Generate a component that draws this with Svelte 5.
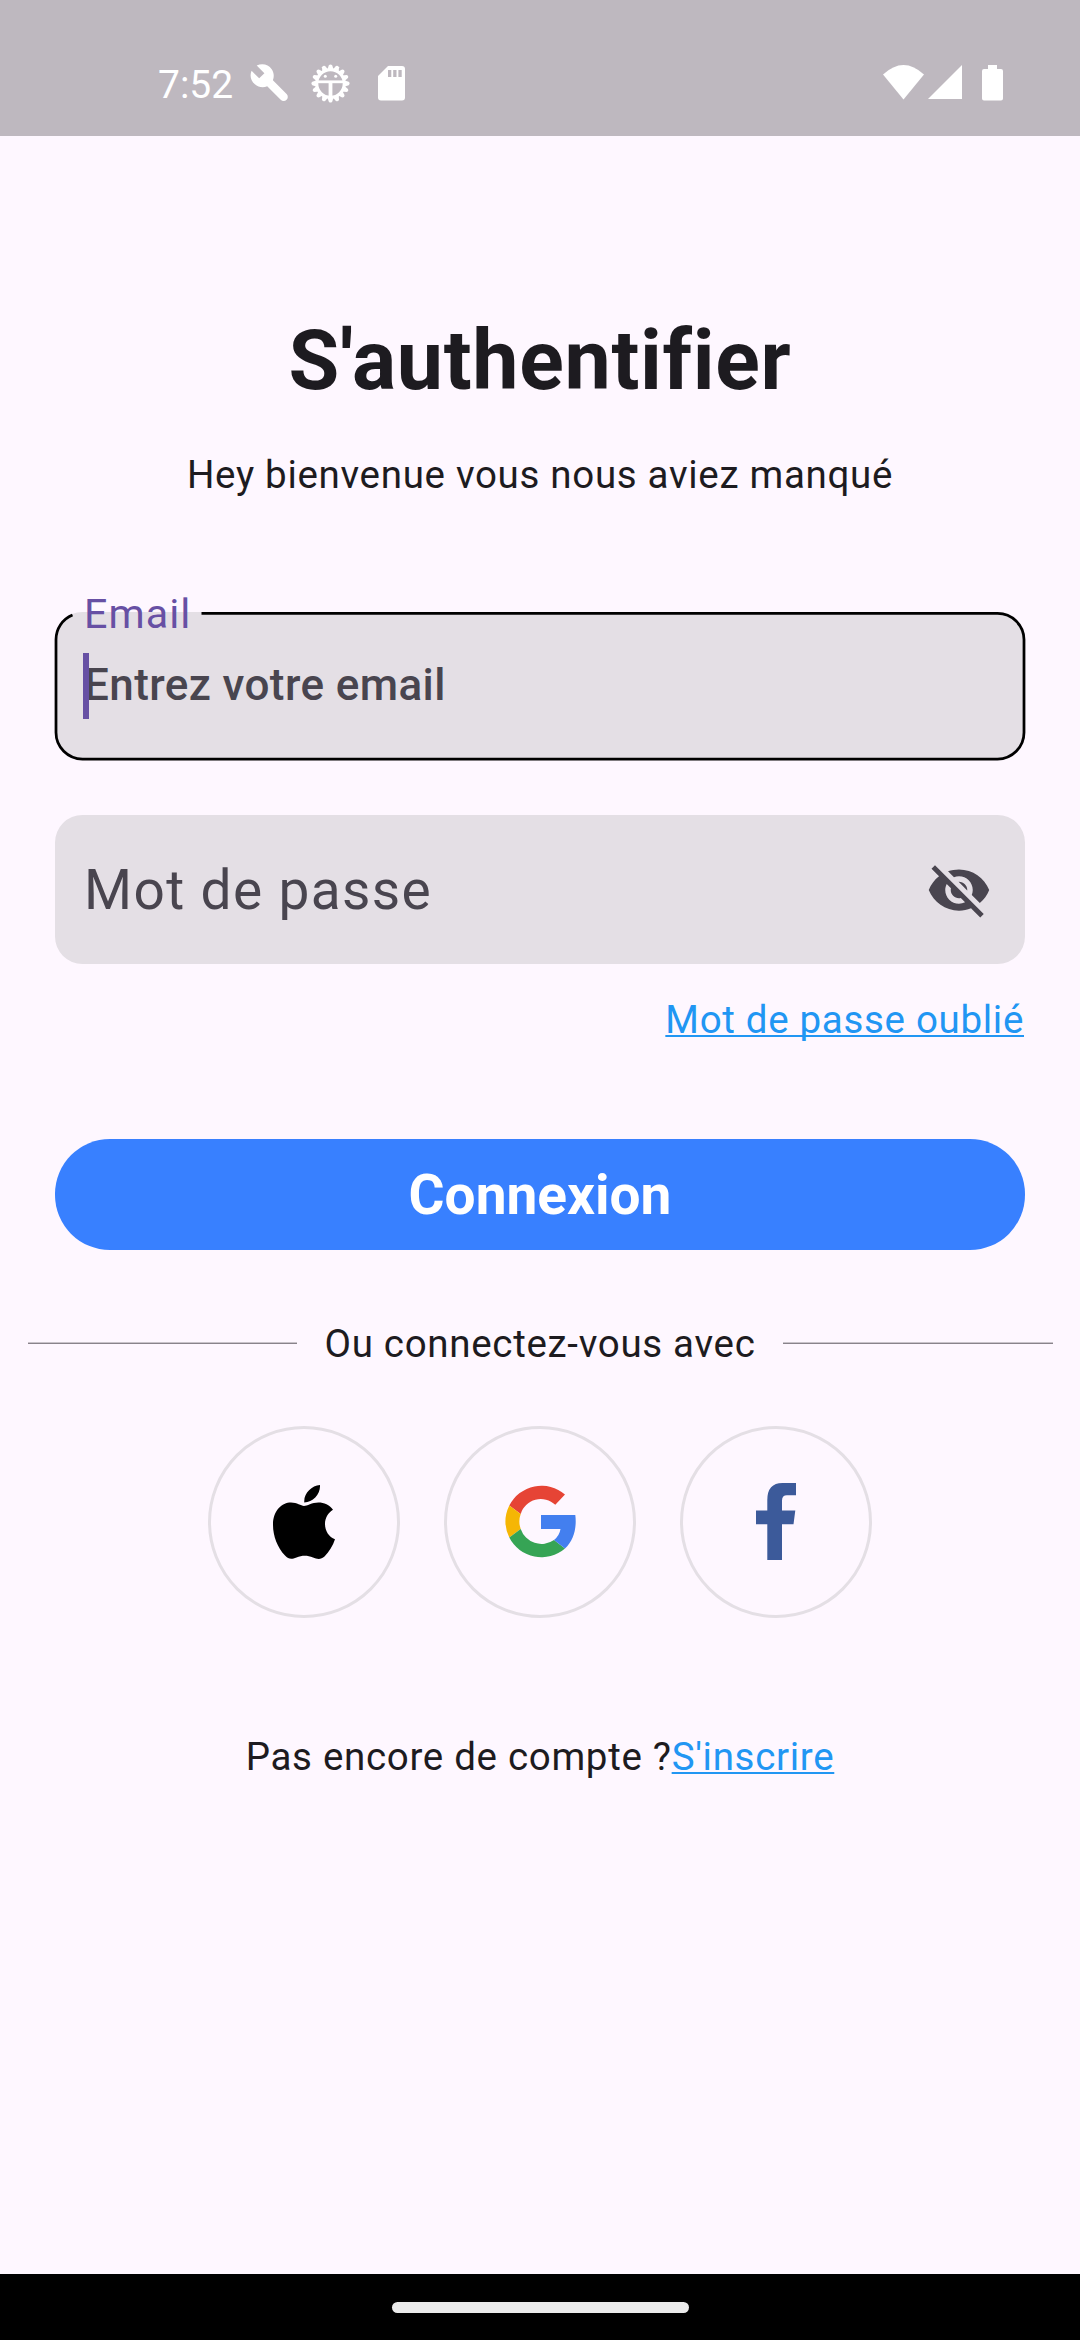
<script>
  let email = $state('');
  const teeth = Array.from({ length: 16 }, (_, i) => i * 22.5);
</script>

<div class="screen">
  <header class="status">
    <div class="left">
      <span class="clock">7:52</span>
      <svg class="wrench" width="38" height="38" viewBox="0 0 38 38">
        <path fill="#fff" d="M6.7 1.6 C12.2-1.1 18.5.5 21.7 5.2C24 8.6 24.3 12.5 22.9 16.3L36.6 30C38.2 31.6 38.2 34.2 36.6 35.8C35 37.5 32.3 37.5 30.7 35.8L17.2 22.3C12.9 24.1 8.2 23.2 4.9 20.3C.9 16.7-.6 11.7 1.6 6.8L9.2 14.3L14.4 9.2Z" />
      </svg>
      <svg class="gear" width="39" height="39" viewBox="-19.5 -19.5 39 39">
        {#each teeth as a}
          <path fill="#fff" transform="rotate({a})" d="M-3.200-13.500L-1.700-18.200Q0-20 1.700-18.200L3.200-13.500Z" />
        {/each}
        <circle r="13.700" fill="none" stroke="#fff" stroke-width="3" />
        <path d="M-13-1.700H13" stroke="#fff" stroke-width="2.800" />
        <path d="M0-1V13" stroke="#fff" stroke-width="3.800" />
        <circle cx="-5.200" cy="-7.200" r="1.500" fill="#fff" /><circle cx="5.200" cy="-7.200" r="1.500" fill="#fff" />
      </svg>
      <svg class="card" width="27" height="35" viewBox="0 0 27 35">
        <path fill="#fff" d="M10 0H24Q27 0 27 3V31.500Q27 34.500 24 34.500H3Q0 34.500 0 31.500V10Z" />
        <path fill="#beb8bf" d="M10 4h3.300v7H10zM15.200 4h3.300v7h-3.300zM20.400 4h3.300v7h-3.300z" />
      </svg>
    </div>
    <div class="right">
      <svg class="wifi" width="41" height="35" viewBox="0 0 41 35"><path fill="#fff" d="M0 9.500Q20.500-9.500 41 9.500L20.500 34.500Z" /></svg>
      <svg class="signal" width="34" height="34" viewBox="0 0 34 34"><path fill="#fff" d="M34 0V34H0Z" /></svg>
      <svg class="battery" width="21" height="36" viewBox="0 0 21 36"><path fill="#fff" d="M6 0H15V4H19Q21 4 21 6V33.500Q21 35.500 19 35.500H2Q0 35.500 0 33.500V6Q0 4 2 4H6Z" /></svg>
    </div>
  </header>

  <main>
    <h1>S'authentifier</h1>
    <p class="welcome">Hey bienvenue vous nous aviez manqué</p>

    <label class="field email">
      <svg class="outline" width="972" height="150" viewBox="0 0 972 150">
        <path d="M18.500 4A26.500 26.500 0 0 0 2 28.500V121.500A26.500 26.500 0 0 0 28.500 148H943.500A26.500 26.500 0 0 0 970 121.500V28.500A26.500 26.500 0 0 0 943.500 2.400H147.500" fill="none" stroke="#000" stroke-width="2.750" />
      </svg>
      <span class="floating">Email</span>
      <input class="hint" placeholder="Entrez votre email" bind:value={email} />
      <i class="caret"></i>
    </label>

    <div class="field password">
      <span>Mot de passe</span>
      <svg width="66" height="66" viewBox="0 0 24 24">
        <path fill="#49454f" d="M12 7c2.760 0 5 2.240 5 5 0 .650-.130 1.260-.360 1.830l2.920 2.920c1.510-1.260 2.700-2.890 3.430-4.750-1.730-4.390-6-7.500-11-7.500-1.400 0-2.740.250-3.980.700l2.160 2.160C10.740 7.130 11.350 7 12 7zM2 4.270l2.280 2.280.460.460C3.080 8.300 1.780 10.020 1 12c1.730 4.390 6 7.500 11 7.500 1.550 0 3.030-.300 4.380-.840l.420.420L19.730 22 21 20.730 3.270 3 2 4.270zM7.530 9.800l1.550 1.550c-.050.210-.080.430-.080.650 0 1.660 1.340 3 3 3 .220 0 .440-.030.650-.080l1.550 1.550c-.670.330-1.410.530-2.200.530-2.760 0-5-2.240-5-5 0-.790.200-1.530.530-2.200zm4.310-.780l3.150 3.150.020-.160c0-1.660-1.340-3-3-3l-.170.010z" />
      </svg>
    </div>

    <div class="forgot"><span class="link">Mot de passe oublié</span></div>
    <button>Connexion</button>

    <div class="divider"><i></i><span>Ou connectez-vous avec</span><i></i></div>

    <div class="social">
      <div class="round">
        <svg width="62" height="74" viewBox="0 0 62 74">
          <path d="M47 0C47.600 9 40 17.400 31.300 17.400C30.500 8.500 38.500.600 47 0ZM31 21C34 21 39 17.500 45.500 17.500C51 17.500 56.500 20 60 24.700C55 27.800 52 33 52 39C52 46 56 52 62 54.200C60 60.500 56 67 51.500 71.500C48 74.800 44 74.200 40 72.500C34.500 70 29 70 23.500 72.500C18 74.700 15.500 74 12 70.500C4.500 62.800 0 51 0 40C0 25.500 9 17.600 18 17.600C24 17.600 28 21 31 21Z" />
        </svg>
      </div>
      <div class="round">
        <svg class="google" width="71" height="73" viewBox="0 0 71 73">
          <path fill="#e64435" d="M4.300 20.500A36 36 0 0 1 60 9.500L50.300 19.800A21 21 0 0 0 15.700 29Z" />
          <path fill="#f5b605" d="M4.300 20.500A36.500 36.500 0 0 0 4.300 52.500L15.700 44A22 22 0 0 1 15.700 29Z" />
          <path fill="#36a455" d="M4.300 52.500A36 36 0 0 0 60 63.500L49 55A22 22 0 0 1 15.700 44Z" />
          <path fill="#437fef" d="M36 30H70.300C72 43 68.500 56 60 63.500L49 55Q54.500 50.500 55.500 44H36Z" />
        </svg>
      </div>
      <div class="round">
        <svg class="facebook" width="40" height="77" viewBox="0 0 40 77">
          <path fill="#3c5a9a" d="M11.300 77V41.300H0V27.500H11.300V17Q11.300 0 26.500 0H40V12.300H31Q26 12.300 26 17.500V27.500H39.300L37.500 41.300H26V77Z" />
        </svg>
      </div>
    </div>

    <p class="signup">Pas encore de compte ?<span class="link">S'inscrire</span></p>
  </main>

  <footer><i></i></footer>
</div>

<style>
  :global(body) { background: #fef7ff; }
  .screen {
    width: 1080px; height: 2340px; display: flex; flex-direction: column;
    background: #fef7ff; color: #1d1b20; overflow: hidden;
    font: 400 38.5px/55px Roboto, sans-serif; letter-spacing: .6875px;
    box-sizing: border-box;
  }
  svg { display: block; flex: none; }
  .status { height: 136px; flex: none; background: #beb8bf; display: flex; justify-content: space-between; }
  .left, .right { display: flex; align-items: flex-start; }
  .left { padding: 64px 0 0 158px; }
  .clock { width: 92px; padding-top: 1px; font-size: 39px; line-height: 41px; letter-spacing: 0; color: #fff; }
  .gear { margin-left: 23px; }
  .card { margin: 2px 0 0 28px; }
  .right { padding: 65px 77px 0 0; }
  .signal { margin: 0 20px 0 4px; }
  main { flex: 1; display: flex; flex-direction: column; align-items: center; }
  h1 { margin: 173px 0 0; font-size: 82.5px; line-height: 104px; font-weight: 700; letter-spacing: .6875px; }
  p { margin: 0; white-space: nowrap; }
  .welcome { margin-top: 34px; }
  .field { position: relative; box-sizing: border-box; width: 970px; height: 148.5px; border-radius: 27.5px; background: #e4dfe5; }
  .email { margin-top: 109.5px; padding: 49.5px 29px 0; }
  .outline { position: absolute; left: -1px; top: -1px; }
  .floating { position: absolute; left: 29px; top: -24.5px; font-size: 41.25px; color: #6750a4; letter-spacing: 1.03px; }
  .hint { display: block; width: 100%; height: 48px; padding: 0; border: 0; outline: 0; background: none; font: 500 44px/48px Roboto, sans-serif; letter-spacing: .4px; color: #49454f; }
  .hint::placeholder { color: #49454f; opacity: 1; }
  .caret { position: absolute; left: 28px; top: 41.5px; width: 6px; height: 66px; background: #6750a4; }
  .password { margin-top: 55px; padding: 1px 33px 0 29px; display: flex; align-items: center; justify-content: space-between; color: #49454f; font-size: 55px; letter-spacing: 1.375px; }
  .password span { padding-top: 1px; }
  .forgot { width: 968px; margin-top: 28.5px; text-align: right; }
  .link { color: #2196f3; text-decoration: underline; text-decoration-thickness: 2px; text-underline-offset: 2px; text-decoration-skip-ink: none; }
  button { width: 970px; height: 110.5px; margin-top: 92.300px; padding: 1px 0 0; border: 0; border-radius: 55px; background: #3880ff; color: #fff; font: 700 55px/110px Roboto, sans-serif; letter-spacing: 0; }
  .divider { width: 1025px; margin-top: 66.200px; display: flex; align-items: center; gap: 27.5px; }
  .divider i { flex: 1; height: 2px; background: linear-gradient(#c9c3ca 50%, #89838b 50%); }
  .social { display: flex; gap: 44px; margin-top: 55px; }
  .round { box-sizing: border-box; width: 192px; height: 192px; border: 3px solid #e4dfe5; border-radius: 50%; display: flex; align-items: center; justify-content: center; }
  .signup { margin-top: 111px; }
  footer { height: 66px; flex: none; background: #000; display: flex; align-items: center; justify-content: center; }
  footer i { width: 297px; height: 11px; border-radius: 6px; background: #ebebeb; }
</style>
